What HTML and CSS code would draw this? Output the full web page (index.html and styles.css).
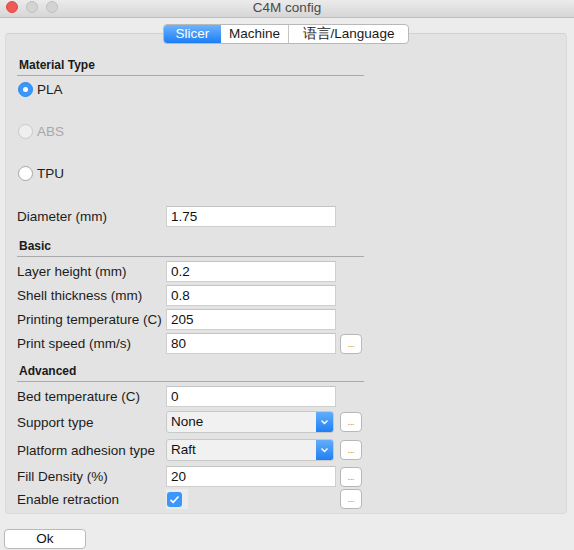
FILE: index.html
```html
<!DOCTYPE html>
<html>
<head>
<meta charset="utf-8">
<link rel="stylesheet" href="styles.css">
</head>
<body>
<div class="titlebar">
  <div class="lights">
    <span class="light red"></span>
    <span class="light grey"></span>
    <span class="light grey"></span>
  </div>
  <div class="title">C4M config</div>
  <div></div>
</div>

<div class="tabs-row">
  <div class="tabs">
    <div class="tab active">Slicer</div>
    <div class="tab">Machine</div>
    <div class="tab lang">语言/Language</div>
  </div>
</div>

<div class="panel">
  <div class="section-head">Material Type</div>
  <div class="radio-row first"><span class="radio checked"></span><span>PLA</span></div>
  <div class="radio-row disabled"><span class="radio off"></span><span>ABS</span></div>
  <div class="radio-row"><span class="radio"></span><span>TPU</span></div>

  <div class="row diameter"><span class="label">Diameter (mm)</span><div class="input">1.75</div></div>

  <div class="section-head basic">Basic</div>
  <div class="row r-first"><span class="label">Layer height (mm)</span><div class="input">0.2</div></div>
  <div class="row r-next"><span class="label">Shell thickness (mm)</span><div class="input">0.8</div></div>
  <div class="row r-next"><span class="label">Printing temperature (C)</span><div class="input">205</div></div>
  <div class="row r-next"><span class="label">Print speed (mm/s)</span><div class="input">80</div><div class="more">...</div></div>

  <div class="section-head advanced">Advanced</div>
  <div class="row r-first"><span class="label">Bed temperature (C)</span><div class="input">0</div></div>
  <div class="row r-support"><span class="label">Support type</span><div class="select"><span class="sel-text">None</span><span class="arrow"><svg width="9" height="6" viewBox="0 0 9 6"><path d="M1.5 1.5 L4.5 4.5 L7.5 1.5" fill="none" stroke="#fff" stroke-width="1.4"/></svg></span></div><div class="more">...</div></div>
  <div class="row r-plat"><span class="label">Platform adhesion type</span><div class="select"><span class="sel-text">Raft</span><span class="arrow"><svg width="9" height="6" viewBox="0 0 9 6"><path d="M1.5 1.5 L4.5 4.5 L7.5 1.5" fill="none" stroke="#fff" stroke-width="1.4"/></svg></span></div><div class="more">...</div></div>
  <div class="row r-plat"><span class="label">Fill Density (%)</span><div class="input">20</div><div class="more">...</div></div>
  <div class="row r-enable"><span class="label">Enable retraction</span><div class="check-cell"><span class="check"><svg width="11" height="9" viewBox="0 0 11 9"><path d="M1.5 4.8 L4.2 7.3 L9.5 1.5" fill="none" stroke="#fff" stroke-width="1.6"/></svg></span></div><div class="more">...</div></div>
</div>

<div class="footer">
  <div class="ok">Ok</div>
</div>
</body>
</html>
```

FILE: styles.css
```css
html, body {
  margin: 0;
  padding: 0;
}
body {
  width: 574px;
  height: 550px;
  overflow: hidden;
  background: #ececec;
  font-family: "Liberation Sans", Arial, sans-serif;
  font-size: 13.5px;
  color: #1c1c1c;
}

.titlebar {
  height: 17px;
  border-bottom: 1px solid #bdbdbd;
  background: linear-gradient(#ebebeb, #d6d6d6);
  display: grid;
  grid-template-columns: 1fr auto 1fr;
  align-items: start;
}
.lights {
  display: flex;
  gap: 8px;
  padding: 1px 0 0 6px;
}
.light {
  width: 12px;
  height: 12px;
  border-radius: 50%;
  box-sizing: border-box;
}
.light.red {
  background: #ee5a55;
  border: 1px solid #de4a45;
}
.light.grey {
  background: #d3d3d3;
  border: 1px solid #c0c0c0;
}
.title {
  line-height: 16px;
  color: #4a4a4a;
  font-size: 13.5px;
}

.tabs-row {
  display: flex;
  justify-content: center;
  margin-top: 6px;
  margin-bottom: -11px;
  padding-right: 2px;
  position: relative;
  z-index: 1;
}
.tabs {
  display: flex;
  height: 20px;
  box-sizing: border-box;
  border: 1px solid #b9b9b9;
  border-radius: 4px;
  background: #fff;
  overflow: hidden;
}
.tab {
  line-height: 18px;
  text-align: center;
  color: #1a1a1a;
  border-left: 1px solid #c6c6c6;
}
.tab.active {
  width: 57px;
  border-left: none;
  color: #fff;
  background: linear-gradient(#6db3fb, #1c7ef5);
}
.tab:nth-child(2) {
  width: 67px;
  border-left: none;
}
.tab.lang {
  width: 119px;
}

.panel {
  margin: 0 7px 0 5px;
  background: #e3e3e3;
  border: 1px solid #dadada;
  border-top-color: #d2d2d2;
  border-radius: 4px;
  padding: 25px 0 0 11px;
  height: 481px;
  box-sizing: border-box;
}

.section-head {
  width: 345px;
  font-weight: bold;
  font-size: 12px;
  line-height: 13px;
  padding: 0 0 3px 2px;
  border-bottom: 1px solid #a9a9a9;
  color: #1a1a1a;
}
.section-head.basic {
  margin-top: 13px;
}
.section-head.advanced {
  margin-top: 11px;
}

.radio-row {
  display: flex;
  align-items: center;
  gap: 4px;
  height: 24px;
  margin-top: 18px;
  padding-left: 1px;
}
.radio-row.first {
  margin-top: 1px;
}
.radio-row.disabled {
  color: #a8a8a8;
}
.radio {
  width: 15px;
  height: 15px;
  box-sizing: border-box;
  border-radius: 50%;
  background: #fff;
  border: 1px solid #a6a6a6;
  display: flex;
  align-items: center;
  justify-content: center;
}
.radio.checked {
  background: #3b97fb;
  border-color: #2f86ea;
}
.radio.checked::after {
  content: "";
  width: 5px;
  height: 5px;
  border-radius: 50%;
  background: #fff;
}
.radio.off {
  background: #efefef;
  border-color: #c9c9c9;
}

.row {
  display: grid;
  grid-template-columns: 149px 174px 22px;
  align-items: center;
  height: 21px;
}
.row.diameter {
  margin-top: 21px;
}
.row.r-first {
  margin-top: 4px;
}
.row.r-next {
  margin-top: 3px;
}
.row.r-support {
  margin-top: 4px;
  height: 22px;
}
.row.r-plat {
  margin-top: 6px;
}
.row.r-enable {
  margin-top: 2px;
  height: 20px;
}

.label {
  white-space: nowrap;
  color: #1c1c1c;
}

.input {
  width: 170px;
  height: 21px;
  box-sizing: border-box;
  background: #fff;
  border: 1px solid #cfcfcf;
  border-top-color: #c4c4c4;
  padding-left: 4px;
  line-height: 20px;
  color: #111;
}

.select {
  width: 168px;
  height: 22px;
  box-sizing: border-box;
  display: flex;
  border: 1px solid #c8c8c8;
  border-radius: 3px;
  background: #f1f1f1;
  overflow: hidden;
}
.sel-text {
  flex: 1;
  padding-left: 4px;
  line-height: 20px;
  color: #111;
}
.arrow {
  width: 17px;
  background: linear-gradient(#62aefc, #1f7ff4);
  display: flex;
  align-items: center;
  justify-content: center;
}

.more {
  width: 22px;
  height: 20px;
  box-sizing: border-box;
  background: #fff;
  border: 1px solid #b7b7b7;
  border-radius: 4px;
  font-size: 8px;
  line-height: 20px;
  text-align: center;
  color: #6b4a2a;
  justify-self: end;
}

.check-cell {
  width: 22px;
  height: 20px;
  background: #ececec;
  display: flex;
  align-items: center;
  padding-left: 1px;
  box-sizing: border-box;
}
.check {
  width: 15px;
  height: 15px;
  border-radius: 3px;
  background: #3b97fb;
  display: flex;
  align-items: center;
  justify-content: center;
}

.footer {
  padding: 15px 0 0 4px;
}
.ok {
  width: 82px;
  height: 20px;
  box-sizing: border-box;
  background: #fff;
  border: 1px solid #b9b9b9;
  border-radius: 4px;
  text-align: center;
  line-height: 18px;
  color: #111;
}
```
